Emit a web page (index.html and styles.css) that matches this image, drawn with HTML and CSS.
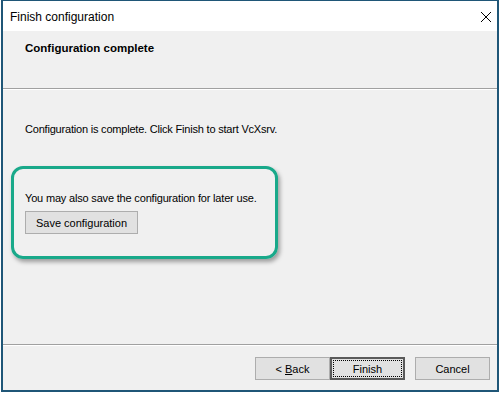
FILE: index.html
```html
<!DOCTYPE html>
<html>
<head>
<meta charset="utf-8">
<link rel="stylesheet" href="styles.css">
</head>
<body>
<div class="window">
  <div class="titlebar">
    <span class="title">Finish configuration</span>
    <svg class="close" width="12" height="12" viewBox="0 0 12 12"><path d="M1 1 L11 11 M11 1 L1 11" stroke="#000" stroke-width="1" fill="none"/></svg>
  </div>
  <div class="header">
    <div class="heading">Configuration complete</div>
  </div>
  <div class="content">
    <p class="msg">Configuration is complete. Click Finish to start VcXsrv.</p>
    <div class="highlight">
      <p class="msg2">You may also save the configuration for later use.</p>
      <button class="btn save">Save configuration</button>
    </div>
  </div>
  <div class="footer">
    <button class="btn back"><span>&lt; <u>B</u>ack</span></button>
    <button class="btn finish"><span class="focus">Finish</span></button>
    <button class="btn cancel">Cancel</button>
  </div>
</div>
</body>
</html>
```
FILE: styles.css
```css
html, body {
  margin: 0;
  padding: 0;
  background: #ffffff;
}
body {
  width: 501px;
  height: 396px;
  font-family: "Liberation Sans", Arial, sans-serif;
  font-size: 11px;
  color: #000;
}
.window {
  margin-left: 1px;
  width: 494px;
  height: 389px;
  border: 2px solid #1f5677;
  border-top-width: 1px;
  background: #f0f0f0;
  display: flex;
  flex-direction: column;
}
.titlebar {
  height: 30px;
  background: #ffffff;
  display: flex;
  align-items: center;
  justify-content: space-between;
  padding: 0 5px 0 7px;
  flex: none;
}
.title {
  font-family: "Liberation Sans", Arial, sans-serif;
  font-size: 12px;
  color: #000;
  padding-top: 1px;
}
.close {
  display: block;
  margin-top: 1px;
}
.header {
  height: 57px;
  flex: none;
  background: #f0f0f0;
  border-bottom: 1px solid #a0a0a0;
  box-shadow: 0 1px 0 #ffffff;
  padding-left: 22px;
}
.heading {
  font-weight: bold;
  font-size: 11.5px;
  margin-top: 11px;
  line-height: 13px;
}
.content {
  flex: 1;
  padding: 34px 0 0 8px;
  border-bottom: 1px solid #a0a0a0;
}
.msg {
  margin: 0 0 0 14px;
  line-height: 13px;
  letter-spacing: -0.2px;
}
.highlight {
  margin-top: 30px;
  width: 250px;
  height: 87px;
  border: 3px solid #19a98a;
  border-radius: 12px;
  box-shadow: 2px 3px 4px rgba(0, 0, 0, 0.35);
  padding-left: 11px;
}
.msg2 {
  margin: 23px 0 0 0;
  line-height: 13px;
  letter-spacing: -0.18px;
}
.btn {
  font-family: "Liberation Sans", Arial, sans-serif;
  font-size: 11px;
  color: #000;
  background: #e1e1e1;
  border: 1px solid #adadad;
  height: 23px;
  padding: 0;
  margin: 0;
  display: flex;
  align-items: center;
  justify-content: center;
  box-sizing: border-box;
}
.save {
  margin-top: 6px;
  width: 113px;
}
.footer {
  height: 45px;
  flex: none;
  box-shadow: inset 0 1px 0 #ffffff;
  display: flex;
  justify-content: flex-end;
  align-items: flex-start;
  padding: 12px 7px 0 0;
  box-sizing: border-box;
}
.back, .finish, .cancel {
  width: 75px;
}
.finish {
  border: 2px solid #5a5a5a;
}
.focus {
  display: flex;
  align-items: center;
  justify-content: center;
  width: 67px;
  height: 15px;
  border: 1px dotted #000;
}
.cancel {
  margin-left: 10px;
}
```
